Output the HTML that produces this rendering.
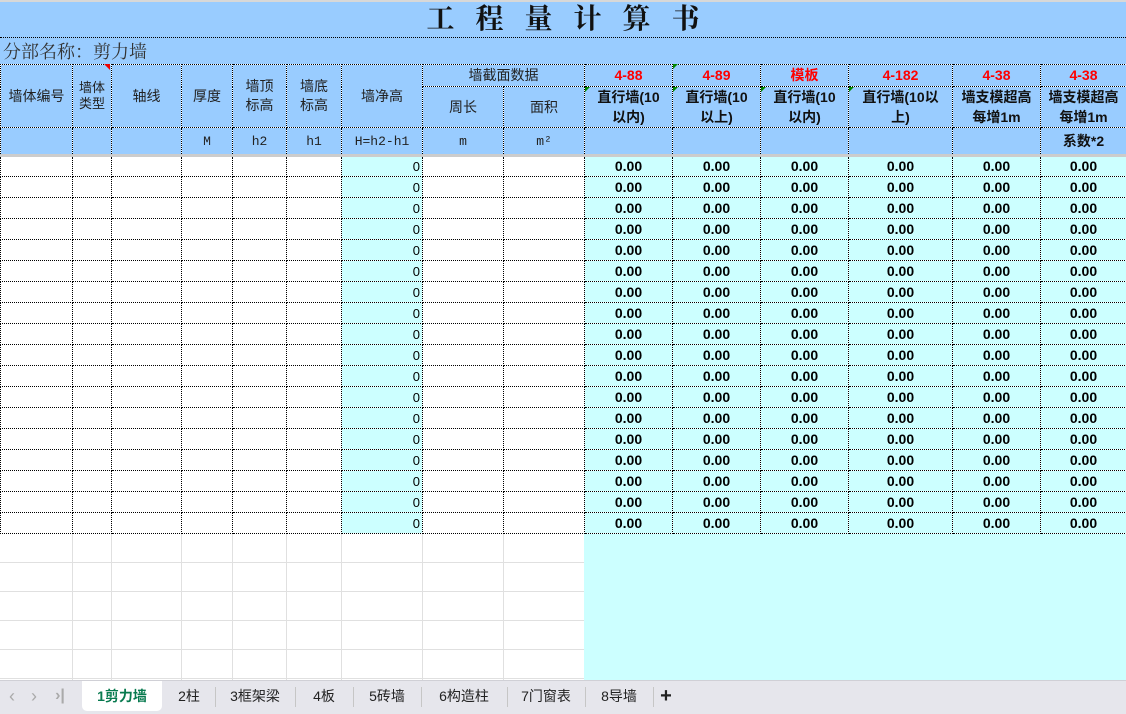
<!DOCTYPE html>
<html><head><meta charset="utf-8">
<style>
*{margin:0;padding:0;box-sizing:border-box}
body{width:1126px;height:714px;overflow:hidden;background:#fff;font-family:"Liberation Sans","Noto Sans CJK SC",sans-serif;position:relative}
.top{position:absolute;left:0;top:0;width:1126px;height:2px;background:#d8d8d8}
.title{position:absolute;left:0;top:2px;width:1126px;height:36px;background:#99ccff;border-bottom:1px dotted #000;text-align:center;font-family:"Liberation Serif","Noto Serif CJK SC",serif;font-size:28px;font-weight:bold;line-height:36px;letter-spacing:21px;padding-left:21px;color:#111}
.sub{position:absolute;left:0;top:38px;width:1126px;height:26px;background:#99ccff;font-family:"Liberation Serif","Noto Serif CJK SC",serif;font-size:18px;line-height:28px;padding-left:3px;color:#333}
table{position:absolute;left:0;top:64px;border-collapse:collapse;table-layout:fixed;width:1126px}
td{border:1px dotted #000;font-size:14px;text-align:center;padding:0;overflow:hidden;white-space:nowrap;line-height:17px}
.h td{background:#99ccff;color:#222}
.h td.r{color:#f00;font-weight:bold;font-size:14px}
.h td.b{font-weight:bold;font-size:14px;color:#111;white-space:normal;line-height:20px}
.u td{font-family:"Liberation Mono","Noto Sans CJK SC",monospace;font-size:13px}
.d td{height:21px;font-weight:bold;font-size:14px;color:#000;line-height:19px}
.d td.c{background:#ccffff}
.d td.z{background:#ccffff;text-align:right;font-weight:normal;font-size:13px;padding-right:2px}
.first td{border-top:3px solid #cccccc;height:21px}
.blank{position:absolute;left:0;top:534px;width:1126px;height:146px}
.tabs{position:absolute;left:0;top:680px;width:1126px;height:34px;background:#e6e6ec;border-top:1px solid #d0d0d6}
.tab{position:absolute;top:0;height:30px;line-height:30px;font-size:14px;color:#222;text-align:center}
.sep{position:absolute;top:6px;width:1px;height:20px;background:#c6c6c6}
.tri{position:absolute;width:0;height:0;border-style:solid}
</style></head><body>
<div class="top"></div>
<div class="title">工程量计算书</div>
<div class="sub">分部名称：剪力墙</div>
<table>
<colgroup><col style="width:72px"><col style="width:39px"><col style="width:70px"><col style="width:51px"><col style="width:54px"><col style="width:55px"><col style="width:81px"><col style="width:81px"><col style="width:81px"><col style="width:88px"><col style="width:88px"><col style="width:88px"><col style="width:104px"><col style="width:88px"><col style="width:86px"></colgroup>
<tr class="h" style="height:22px"><td rowspan="2">墙体编号</td><td rowspan="2" style="white-space:normal;line-height:16px;font-size:13px">墙体<br>类型</td><td rowspan="2">轴线</td><td rowspan="2">厚度</td><td rowspan="2" style="line-height:19px">墙顶<br>标高</td><td rowspan="2" style="line-height:19px">墙底<br>标高</td><td rowspan="2">墙净高</td><td colspan="2">墙截面数据</td><td class="r">4-88</td><td class="r">4-89</td><td class="r">模板</td><td class="r">4-182</td><td class="r">4-38</td><td class="r">4-38</td></tr>
<tr class="h" style="height:41px"><td>周长</td><td>面积</td><td class="b">直行墙(10<br>以内)</td><td class="b">直行墙(10<br>以上)</td><td class="b">直行墙(10<br>以内)</td><td class="b">直行墙(10以<br>上)</td><td class="b">墙支模超高<br>每增1m</td><td class="b">墙支模超高<br>每增1m</td></tr>
<tr class="h u" style="height:28px"><td></td><td></td><td></td><td>M</td><td>h2</td><td>h1</td><td>H=h2-h1</td><td>m</td><td>m²</td><td></td><td></td><td></td><td></td><td></td><td class="b" style="font-family:'Liberation Sans','Noto Sans CJK SC',sans-serif">系数*2</td></tr>
<tr class="d first"><td></td><td></td><td></td><td></td><td></td><td></td><td class="z">0</td><td></td><td></td><td class="c">0.00</td><td class="c">0.00</td><td class="c">0.00</td><td class="c">0.00</td><td class="c">0.00</td><td class="c">0.00</td></tr>
<tr class="d"><td></td><td></td><td></td><td></td><td></td><td></td><td class="z">0</td><td></td><td></td><td class="c">0.00</td><td class="c">0.00</td><td class="c">0.00</td><td class="c">0.00</td><td class="c">0.00</td><td class="c">0.00</td></tr>
<tr class="d"><td></td><td></td><td></td><td></td><td></td><td></td><td class="z">0</td><td></td><td></td><td class="c">0.00</td><td class="c">0.00</td><td class="c">0.00</td><td class="c">0.00</td><td class="c">0.00</td><td class="c">0.00</td></tr>
<tr class="d"><td></td><td></td><td></td><td></td><td></td><td></td><td class="z">0</td><td></td><td></td><td class="c">0.00</td><td class="c">0.00</td><td class="c">0.00</td><td class="c">0.00</td><td class="c">0.00</td><td class="c">0.00</td></tr>
<tr class="d"><td></td><td></td><td></td><td></td><td></td><td></td><td class="z">0</td><td></td><td></td><td class="c">0.00</td><td class="c">0.00</td><td class="c">0.00</td><td class="c">0.00</td><td class="c">0.00</td><td class="c">0.00</td></tr>
<tr class="d"><td></td><td></td><td></td><td></td><td></td><td></td><td class="z">0</td><td></td><td></td><td class="c">0.00</td><td class="c">0.00</td><td class="c">0.00</td><td class="c">0.00</td><td class="c">0.00</td><td class="c">0.00</td></tr>
<tr class="d"><td></td><td></td><td></td><td></td><td></td><td></td><td class="z">0</td><td></td><td></td><td class="c">0.00</td><td class="c">0.00</td><td class="c">0.00</td><td class="c">0.00</td><td class="c">0.00</td><td class="c">0.00</td></tr>
<tr class="d"><td></td><td></td><td></td><td></td><td></td><td></td><td class="z">0</td><td></td><td></td><td class="c">0.00</td><td class="c">0.00</td><td class="c">0.00</td><td class="c">0.00</td><td class="c">0.00</td><td class="c">0.00</td></tr>
<tr class="d"><td></td><td></td><td></td><td></td><td></td><td></td><td class="z">0</td><td></td><td></td><td class="c">0.00</td><td class="c">0.00</td><td class="c">0.00</td><td class="c">0.00</td><td class="c">0.00</td><td class="c">0.00</td></tr>
<tr class="d"><td></td><td></td><td></td><td></td><td></td><td></td><td class="z">0</td><td></td><td></td><td class="c">0.00</td><td class="c">0.00</td><td class="c">0.00</td><td class="c">0.00</td><td class="c">0.00</td><td class="c">0.00</td></tr>
<tr class="d"><td></td><td></td><td></td><td></td><td></td><td></td><td class="z">0</td><td></td><td></td><td class="c">0.00</td><td class="c">0.00</td><td class="c">0.00</td><td class="c">0.00</td><td class="c">0.00</td><td class="c">0.00</td></tr>
<tr class="d"><td></td><td></td><td></td><td></td><td></td><td></td><td class="z">0</td><td></td><td></td><td class="c">0.00</td><td class="c">0.00</td><td class="c">0.00</td><td class="c">0.00</td><td class="c">0.00</td><td class="c">0.00</td></tr>
<tr class="d"><td></td><td></td><td></td><td></td><td></td><td></td><td class="z">0</td><td></td><td></td><td class="c">0.00</td><td class="c">0.00</td><td class="c">0.00</td><td class="c">0.00</td><td class="c">0.00</td><td class="c">0.00</td></tr>
<tr class="d"><td></td><td></td><td></td><td></td><td></td><td></td><td class="z">0</td><td></td><td></td><td class="c">0.00</td><td class="c">0.00</td><td class="c">0.00</td><td class="c">0.00</td><td class="c">0.00</td><td class="c">0.00</td></tr>
<tr class="d"><td></td><td></td><td></td><td></td><td></td><td></td><td class="z">0</td><td></td><td></td><td class="c">0.00</td><td class="c">0.00</td><td class="c">0.00</td><td class="c">0.00</td><td class="c">0.00</td><td class="c">0.00</td></tr>
<tr class="d"><td></td><td></td><td></td><td></td><td></td><td></td><td class="z">0</td><td></td><td></td><td class="c">0.00</td><td class="c">0.00</td><td class="c">0.00</td><td class="c">0.00</td><td class="c">0.00</td><td class="c">0.00</td></tr>
<tr class="d"><td></td><td></td><td></td><td></td><td></td><td></td><td class="z">0</td><td></td><td></td><td class="c">0.00</td><td class="c">0.00</td><td class="c">0.00</td><td class="c">0.00</td><td class="c">0.00</td><td class="c">0.00</td></tr>
<tr class="d"><td></td><td></td><td></td><td></td><td></td><td></td><td class="z">0</td><td></td><td></td><td class="c">0.00</td><td class="c">0.00</td><td class="c">0.00</td><td class="c">0.00</td><td class="c">0.00</td><td class="c">0.00</td></tr>
</table>
<div class="blank">
<svg width="1126" height="146" style="position:absolute;left:0;top:0">
<rect x="584" y="0" width="542" height="146" fill="#ccffff"/>
<g stroke="#e0e0e0" stroke-width="1">
<line x1="0" y1="28.5" x2="584" y2="28.5"/><line x1="0" y1="57.5" x2="584" y2="57.5"/><line x1="0" y1="86.5" x2="584" y2="86.5"/><line x1="0" y1="115.5" x2="584" y2="115.5"/><line x1="0" y1="144.5" x2="584" y2="144.5"/>
<line x1="72.5" y1="0" x2="72.5" y2="146"/><line x1="111.5" y1="0" x2="111.5" y2="146"/><line x1="181.5" y1="0" x2="181.5" y2="146"/><line x1="232.5" y1="0" x2="232.5" y2="146"/><line x1="286.5" y1="0" x2="286.5" y2="146"/><line x1="341.5" y1="0" x2="341.5" y2="146"/><line x1="422.5" y1="0" x2="422.5" y2="146"/><line x1="503.5" y1="0" x2="503.5" y2="146"/>
</g></svg>
</div>
<div class="tri" style="left:104px;top:64px;border-width:0 6px 6px 0;border-color:transparent #e00 transparent transparent"></div>
<div class="tri" style="left:673px;top:64px;border-width:5px 5px 0 0;border-color:#080 transparent transparent transparent"></div>
<div class="tri" style="left:585px;top:87px;border-width:5px 5px 0 0;border-color:#080 transparent transparent transparent"></div>
<div class="tri" style="left:673px;top:87px;border-width:5px 5px 0 0;border-color:#080 transparent transparent transparent"></div>
<div class="tri" style="left:761px;top:87px;border-width:5px 5px 0 0;border-color:#080 transparent transparent transparent"></div>
<div class="tri" style="left:849px;top:87px;border-width:5px 5px 0 0;border-color:#080 transparent transparent transparent"></div>
<div class="tabs">
<div class="tab" style="left:2px;width:20px;color:#aaa;font-size:18px">‹</div>
<div class="tab" style="left:24px;width:20px;color:#aaa;font-size:18px">›</div>
<div class="tab" style="left:50px;width:20px;color:#aaa;font-size:16px;font-weight:bold">›|</div>
<div class="tab" style="left:82px;width:80px;background:#fff;border-radius:0 0 5px 5px;color:#087a4f;font-weight:bold">1剪力墙</div>
<div class="tab" style="left:164px;width:50px">2柱</div><div class="sep" style="left:215px"></div>
<div class="tab" style="left:216px;width:78px">3框架梁</div><div class="sep" style="left:295px"></div>
<div class="tab" style="left:296px;width:56px">4板</div><div class="sep" style="left:353px"></div>
<div class="tab" style="left:354px;width:66px">5砖墙</div><div class="sep" style="left:421px"></div>
<div class="tab" style="left:422px;width:84px">6构造柱</div><div class="sep" style="left:507px"></div>
<div class="tab" style="left:508px;width:76px">7门窗表</div><div class="sep" style="left:585px"></div>
<div class="tab" style="left:586px;width:66px">8导墙</div><div class="sep" style="left:653px"></div>
<div class="tab" style="left:654px;width:24px;font-size:20px;font-weight:bold">+</div>
</div>
</body></html>
